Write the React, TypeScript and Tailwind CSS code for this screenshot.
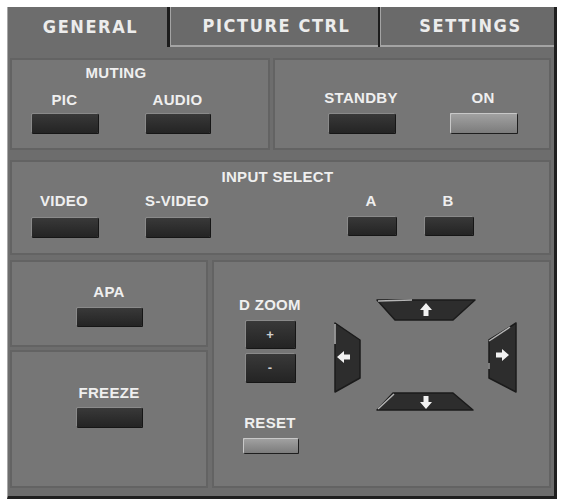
import React from 'react'

const label = "font-['Liberation_Sans',Arial,sans-serif] text-[15px] leading-4 font-bold tracking-[0.3px] text-[#efefef]"

function Btn({ className = '', light = false, children }: { className?: string; light?: boolean; children?: React.ReactNode }) {
  return (
    <div
      className={
        (light
          ? 'bg-gradient-to-b from-[#a3a3a3] to-[#7c7c7c] shadow-[inset_1px_1px_0_#c8c8c8,1px_1px_0_#1e1e1e] '
          : 'bg-gradient-to-b from-[#3a3a3a] to-[#242424] shadow-[inset_1px_1px_0_#8a8a8a,1px_1px_0_#161616] ') +
        'flex items-center justify-center rounded-[1px] ' +
        className
      }
    >
      {children}
    </div>
  )
}

function Col({ name, btn, light = false }: { name: string; btn: string; light?: boolean }) {
  return (
    <div className="flex w-[72px] flex-col items-center">
      <span className={label}>{name}</span>
      <Btn light={light} className={btn} />
    </div>
  )
}

function DPad() {
  return (
    <svg width="188" height="116" viewBox="0 0 188 116" className="mt-[37px] ml-[27px]" strokeLinejoin="round">
      {/* up */}
      <polygon points="45,1 143,1 121,21 63,21" fill="#2d2d2d" stroke="#1b1b1b" strokeWidth="1.5" />
      <polyline points="46,2 80,1" stroke="#b5b5b5" strokeWidth="1.5" fill="none" />
      <path d="M94 4 L100 11 L96.5 11 L96.5 17 L91.5 17 L91.5 11 L88 11 Z" fill="#f2f2f2" />
      {/* down */}
      <polygon points="61,94 121,94 141,111 45,111" fill="#2d2d2d" stroke="#1b1b1b" strokeWidth="1.5" />
      <polyline points="46,110 62,95" stroke="#b5b5b5" strokeWidth="1.5" fill="none" />
      <path d="M94 110 L100 103 L96.5 103 L96.5 97 L91.5 97 L91.5 103 L88 103 Z" fill="#f2f2f2" />
      {/* left */}
      <polygon points="3,24 28,41 28,79 3,93" fill="#2d2d2d" stroke="#1b1b1b" strokeWidth="1.5" />
      <polyline points="3,25 3,45" stroke="#b5b5b5" strokeWidth="1.5" fill="none" />
      <path d="M5 58 L12 52 L12 55.5 L18 55.5 L18 60.5 L12 60.5 L12 64 Z" fill="#f2f2f2" />
      {/* right */}
      <polygon points="157,41 184,24 184,93 157,79" fill="#2d2d2d" stroke="#1b1b1b" strokeWidth="1.5" />
      <polyline points="157,42 178,28" stroke="#b5b5b5" strokeWidth="1.5" fill="none" />
      <polyline points="157,64 157,70" stroke="#9a9a9a" strokeWidth="1.5" fill="none" />
      <path d="M177 56 L170 50 L170 53.5 L164 53.5 L164 58.5 L170 58.5 L170 62 Z" fill="#f2f2f2" />
    </svg>
  )
}

const box = 'border-2 border-[#636363] bg-[#767676]'

export default function App() {
  return (
    <div className="h-[501px] w-[562px] bg-white pt-[7px] pl-[7px]">
      <div className="flex h-[492px] w-[550px] flex-col border-r-[3px] border-b-[3px] border-l border-[#1f1f1f] border-l-[#a8a8a8] bg-[#6d6d6d]">
        {/* Tabs */}
        <div className="flex h-[40px] font-['DejaVu_Sans_Condensed','DejaVu_Sans',sans-serif] text-[18px] font-bold tracking-[1.6px] text-[#ececec] [font-stretch:condensed]">
          <div className="flex w-[159px] items-center justify-center pb-[2px] pl-[6px]">GENERAL</div>
          <div className="w-[3px] bg-[#1c1c1c]" />
          <div className="flex w-[208px] items-center justify-center border-b-2 border-l border-[#a4a4a4] bg-[#6a6a6a] pb-[2px] pl-[4px]">PICTURE CTRL</div>
          <div className="w-[2px] bg-[#1c1c1c]" />
          <div className="flex flex-1 items-center justify-center border-b-2 border-l border-[#a4a4a4] bg-[#6a6a6a] pb-[2px] pl-[6px]">SETTINGS</div>
        </div>

        <div className="flex flex-col pt-[11px] pr-[3px] pl-[2px]">
          {/* Row 1 */}
          <div className="flex h-[92px] gap-[3px]">
            <div className={box + ' flex w-[260px] flex-col pt-[5px] pl-[18px]'}>
              <div className={label + ' w-[182px] pr-[10px] text-center'}>MUTING</div>
              <div className="mt-[11px] flex gap-[44px]">
                <div className="flex w-[69px] flex-col items-center">
                  <span className={label}>PIC</span>
                  <Btn className="mt-[5px] h-[20px] w-[67px]" />
                </div>
                <div className="flex w-[69px] flex-col items-center">
                  <span className={label}>AUDIO</span>
                  <Btn className="mt-[5px] h-[20px] w-[65px]" />
                </div>
              </div>
            </div>
            <div className={box + ' flex flex-1 gap-[50px] pt-[30px] pl-[50px]'}>
              <Col name="STANDBY" btn="mt-[7px] h-[20px] w-[67px]" />
              <Col name="ON" btn="mt-[7px] h-[20px] w-[67px]" light />
            </div>
          </div>

          {/* Row 2 */}
          <div className={box + ' mt-[10px] flex h-[95px] flex-col pt-[7px]'}>
            <div className={label + ' text-center pr-[6px]'}>INPUT SELECT</div>
            <div className="mt-[8px] flex pl-[16px]">
              <Col name="VIDEO" btn="mt-[8px] h-[20px] w-[67px]" />
              <div className="ml-[41px]">
                <Col name="S-VIDEO" btn="mt-[8px] h-[20px] w-[65px]" />
              </div>
              <div className="ml-[122px]">
                <Col name="A" btn="mt-[7px] h-[19px] w-[49px]" />
              </div>
              <div className="ml-[5px]">
                <Col name="B" btn="mt-[7px] h-[19px] w-[49px]" />
              </div>
            </div>
          </div>

          {/* Row 3 */}
          <div className="mt-[5px] flex h-[228px] gap-[4px]">
            <div className="flex w-[198px] flex-col gap-[3px]">
              <div className={box + ' flex h-[87px] flex-col items-center pt-[22px]'}>
                <span className={label}>APA</span>
                <Btn className="mt-[7px] h-[19px] w-[66px]" />
              </div>
              <div className={box + ' flex flex-1 flex-col items-center pt-[33px]'}>
                <span className={label}>FREEZE</span>
                <Btn className="mt-[6px] h-[20px] w-[66px]" />
              </div>
            </div>
            <div className={box + ' flex flex-1 items-start pl-[21px]'}>
              <div className="flex w-[70px] flex-col items-center pt-[35px]">
                <span className={label}>D ZOOM</span>
                <Btn className="mt-[7px] h-[28px] w-[50px]">
                  <span className="font-['Liberation_Sans',sans-serif] text-[13px] leading-none font-bold text-[#cfcfcf]">+</span>
                </Btn>
                <Btn className="mt-[5px] h-[29px] w-[50px]">
                  <span className="font-['Liberation_Sans',sans-serif] text-[13px] leading-none font-bold text-[#cfcfcf]">-</span>
                </Btn>
                <span className={label + ' mt-[33px]'}>RESET</span>
                <Btn light className="mt-[7px] h-[15px] w-[55px]" />
              </div>
              <DPad />
            </div>
          </div>
        </div>
      </div>
    </div>
  )
}
